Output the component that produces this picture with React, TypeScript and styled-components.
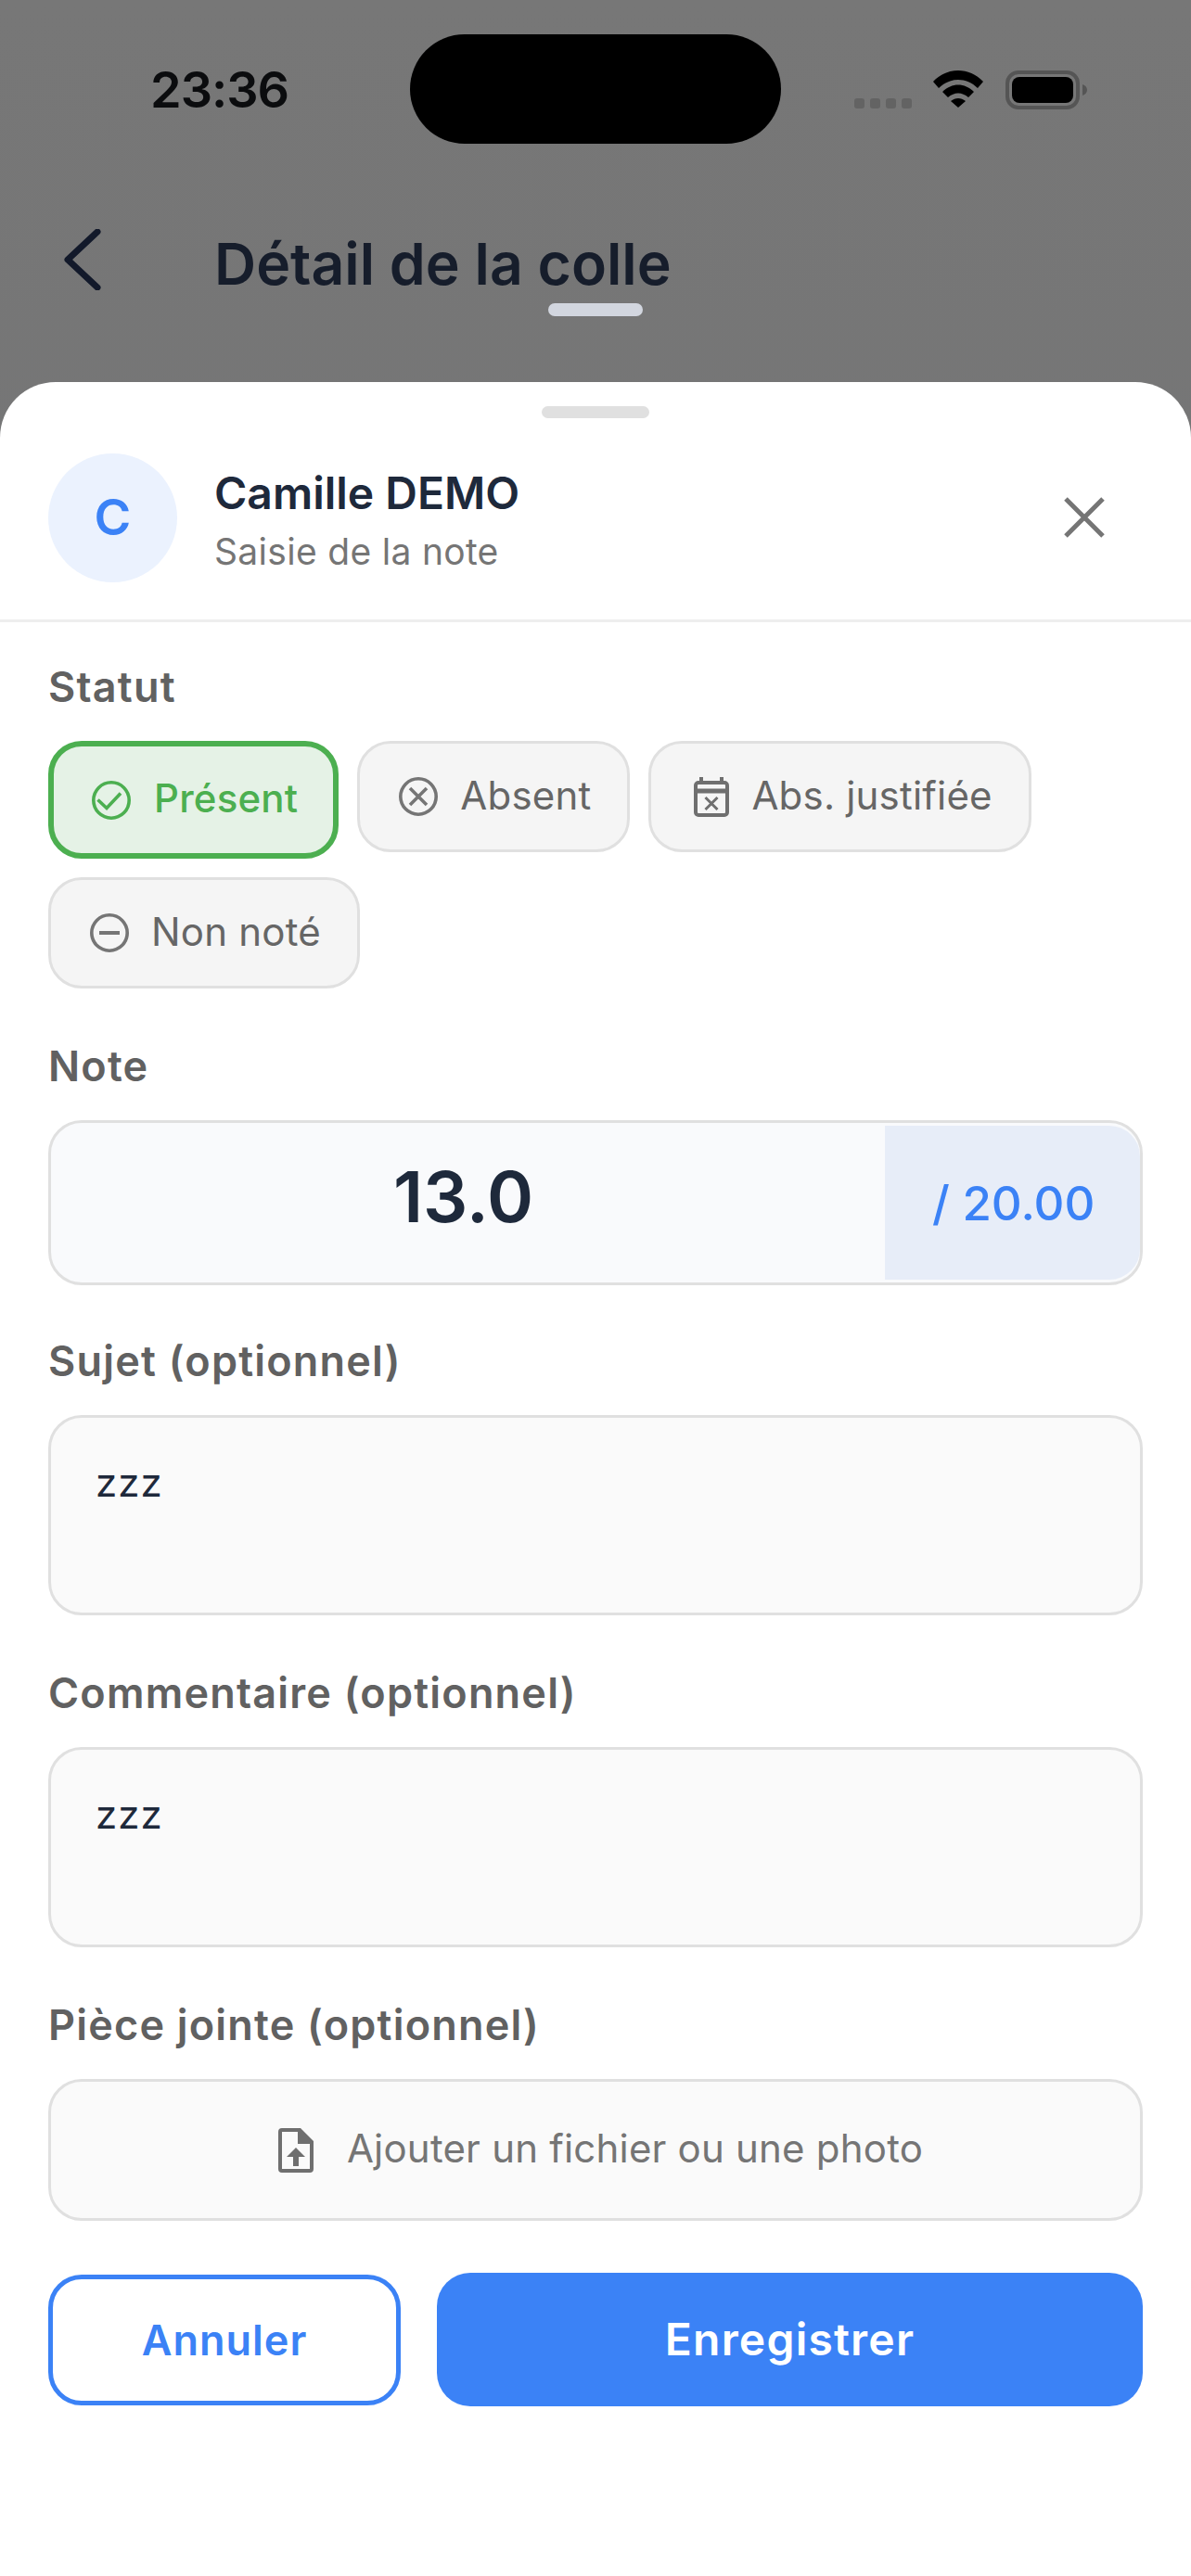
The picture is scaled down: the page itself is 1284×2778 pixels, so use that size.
import React from "react";
import styled, { createGlobalStyle } from "styled-components";

const Global = createGlobalStyle`
  html, body { margin: 0; padding: 0; background: #fff; }
  * { box-sizing: border-box; }
  body { font-family: Inter, "Liberation Sans", sans-serif; }
`;
const Screen = styled.div`
  width: 1284px; height: 2778px; display: flex; flex-direction: column; overflow: hidden;
  background: linear-gradient(#777777, #6f7072);
`;
const Backdrop = styled.div`
  height: 412px; flex: none; display: flex; flex-direction: column;
`;
const StatusBar = styled.div`
  height: 158px; margin-top: 37px; flex: none; display: flex; align-items: flex-start;
`;
const Time = styled.div`
  width: 442px; padding-left: 162px; padding-top: 27px;
  font: 600 54px/66px Inter, sans-serif; color: #0b0c0e; letter-spacing: -1px;
`;
const Island = styled.div`
  width: 400px; height: 118px; border-radius: 59px; background: #000; flex: none;
`;
const StatusIcons = styled.div`
  display: flex; align-items: flex-start; margin-left: 79px; padding-top: 39px;
`;
const Dots = styled.div`
  display: flex; gap: 6px; margin-top: 30px; margin-right: 23px;
`;
const Dot = styled.span`
  width: 11px; height: 11px; border-radius: 3px; background: #636363;
`;
const NavBar = styled.div`
  display: flex; align-items: center; height: 82px; margin-top: 48px; padding-left: 68px; flex: none;
`;
const Back = styled.svg`
  flex: none; display: block; margin-bottom: 8px;
`;
const Title = styled.div`
  margin-left: 121px; font: 600 62.5px/82px Inter, sans-serif; color: #161d2b;
`;
const NavPill = styled.div`
  align-self: center; width: 102px; height: 14px; border-radius: 7px; background: #d2d6df; margin-top: 2px;
`;
const Sheet = styled.div`
  flex: 1; background: #fff; border-radius: 60px 60px 0 0; display: flex; flex-direction: column;
`;
const Handle = styled.div`
  align-self: center; width: 116px; height: 13px; border-radius: 7px; background: #e0e0e0; margin-top: 26px; flex: none;
`;
const Header = styled.div`
  height: 220px; flex: none; display: flex; align-items: center; padding: 0 93px 3px 52px;
  border-bottom: 3px solid #eeeeee;
`;
const Avatar = styled.div`
  width: 139px; height: 139px; border-radius: 50%; background: #ebf2fe; color: #3b82f6;
  display: flex; align-items: center; justify-content: center; font: 600 54px/1 Inter, sans-serif; flex: none;
`;
const HeaderText = styled.div`
  flex: 1; margin-left: 40px; padding-top: 6px; display: flex; flex-direction: column; gap: 9px;
`;
const Name = styled.div`
  font: 600 48px/58px Inter, sans-serif; color: #1e293b;
`;
const Sub = styled.div`
  font: 400 39px/50px Inter, sans-serif; color: #757575; letter-spacing: 0.3px;
`;
const Body = styled.div`
  padding: 45px 52px 0; display: flex; flex-direction: column;
`;
const Field = styled.div<{ $gap?: number }>`
  display: flex; flex-direction: column; margin-bottom: ${(p) => p.$gap ?? 59}px;
`;
const Label = styled.div`
  font: 600 45px/50px Inter, sans-serif; color: #616161; letter-spacing: 1.2px; margin-bottom: 33px;
`;
const Chips = styled.div`
  display: flex; flex-wrap: wrap; gap: 20px; align-items: flex-start;
`;
const Chip = styled.div<{ $active?: boolean }>`
  display: flex; align-items: center; gap: ${(p) => (p.$active ? 25 : 24)}px; height: ${(p) => (p.$active ? 127 : 120)}px;
  padding: 0 ${(p) => (p.$active ? 38 : 39)}px 0 ${(p) => (p.$active ? 41 : 42)}px; border-radius: 36px;
  border: ${(p) => (p.$active ? "6px solid #4caf50" : "3px solid #e0e0e0")};
  background: ${(p) => (p.$active ? "#e5f2e6" : "#f5f5f5")};
  color: ${(p) => (p.$active ? "#4caf50" : "#666666")};
  font: ${(p) => (p.$active ? 500 : 400)} 42px/50px Inter, sans-serif; letter-spacing: 0.2px;
`;
const ChipText = styled.span<{ $lift: number }>`
  margin-bottom: ${(p) => p.$lift}px;
`;
const CalendarMark = styled.svg`
  flex: none; display: block; margin-left: 4px;
`;
const NoteBox = styled.div`
  height: 178px; border: 3px solid #e0e0e0; border-radius: 36px; background: #f9fafc;
  display: flex; align-items: center; overflow: hidden;
`;
const NoteValue = styled.div`
  flex: 1; text-align: center; font: 600 76px/1 Inter, sans-serif; color: #1e293b; padding: 0 10px 15px 0;
`;
const NoteMax = styled.div`
  width: 275px; height: 166px; display: flex; align-items: center; padding-left: 51px;
  border-radius: 0 33px 33px 0;
  background: #e7edf8; color: #3b82f6; font: 500 51px/1 Inter, sans-serif; flex: none;
`;
const TextBox = styled.div`
  height: 216px; border: 3px solid #e0e0e0; border-radius: 36px; background: #fafafa;
  padding: 45px 48px; font: 400 42px/50px Inter, sans-serif; color: #1e293b; letter-spacing: 1px;
`;
const Upload = styled.div`
  height: 153px; border: 3px solid #e0e0e0; border-radius: 36px; background: #fafafa;
  display: flex; align-items: center; justify-content: center; gap: 36px; padding-left: 11px;
  font: 400 42px/50px Inter, sans-serif; color: #757575; letter-spacing: 0.2px;
`;
const UploadText = styled.span`
  margin-bottom: 3px;
`;
const Actions = styled.div`
  display: flex; gap: 39px; align-items: center; margin-top: -3px;
`;
const Cancel = styled.div`
  width: 380px; height: 141px; border: 5px solid #3b82f6; border-radius: 36px; background: #fff;
  display: flex; align-items: center; justify-content: center;
  color: #3b82f6; font: 600 45px/1 Inter, sans-serif; letter-spacing: 1px;
`;
const Save = styled.div`
  flex: 1; height: 144px; border-radius: 36px; background: #3b82f6;
  display: flex; align-items: center; justify-content: center;
  color: #fff; font: 600 48px/1 Inter, sans-serif; letter-spacing: 1.2px;
`;
const Stroke = styled.svg`
  flex: none; display: block;
`;
const WifiMark = styled.svg`
  flex: none; display: block; margin-right: 24px;
`;

const CircleIcon = ({ color, children }: { color: string; children: React.ReactNode }) => (
  <Stroke width="42" height="42" viewBox="0 0 42 42" fill="none" stroke={color} strokeWidth="3.6">
    <circle cx="21" cy="21" r="19.2" />
    {children}
  </Stroke>
);

const Wifi = () => (
  <WifiMark width="54" height="40" viewBox="0 0 54 40" fill="#000">
    <path d="M0 12C15-4 39-4 54 12l-6 7C36 7 18 7 6 19z" />
    <path d="M10 23c10-10 24-10 34 0l-6 6c-7-6-15-6-22 0z" />
    <path d="M19 33c5-4 11-4 16 0l-8 7z" />
  </WifiMark>
);
const Battery = () => (
  <Stroke width="88" height="42" viewBox="0 0 88 42">
    <rect x="2" y="2" width="76" height="38" rx="12" fill="none" stroke="#555" strokeWidth="4" />
    <rect x="7" y="7" width="66" height="28" rx="8" fill="#000" />
    <path d="M83 15c3 1 5 3 5 6s-2 5-5 6z" fill="#555" />
  </Stroke>
);

export default function App() {
  return (
    <Screen>
      <Global />
      <Backdrop>
        <StatusBar>
          <Time>23:36</Time>
          <Island />
          <StatusIcons>
            <Dots><Dot /><Dot /><Dot /><Dot /></Dots>
            <Wifi />
            <Battery />
          </StatusIcons>
        </StatusBar>
        <NavBar>
          <Back width="42" height="66" viewBox="0 0 42 66" fill="none" stroke="#12192a" strokeWidth="7" strokeLinecap="round" strokeLinejoin="round">
            <path d="M37 3 5 33l32 30" />
          </Back>
          <Title>Détail de la colle</Title>
        </NavBar>
        <NavPill />
      </Backdrop>
      <Sheet>
        <Handle />
        <Header>
          <Avatar>C</Avatar>
          <HeaderText>
            <Name>Camille DEMO</Name>
            <Sub>Saisie de la note</Sub>
          </HeaderText>
          <Stroke width="44" height="44" viewBox="0 0 44 44" fill="none" stroke="#757575" strokeWidth="5">
            <path d="M2 2l40 40M42 2 2 42" />
          </Stroke>
        </Header>
        <Body>
          <Field>
            <Label>Statut</Label>
            <Chips>
              <Chip $active>
                <CircleIcon color="#4caf50"><path d="M6.500 20.500 16 29.500 31 13.500" /></CircleIcon>
                <ChipText $lift={4}>Présent</ChipText>
              </Chip>
              <Chip>
                <CircleIcon color="#757575"><path d="M12 12l18 18M30 12 12 30" /></CircleIcon>
                <ChipText $lift={2}>Absent</ChipText>
              </Chip>
              <Chip>
                <CalendarMark width="38" height="43" viewBox="0 0 38 43" fill="none" stroke="#6f6f6f" strokeWidth="4">
                  <rect x="2" y="6" width="34" height="35" rx="3" />
                  <path d="M2 15h34" strokeWidth="5" />
                  <path d="M8 0v6M30 0v6" />
                  <path d="M12.500 22l13 13M25.500 22l-13 13" strokeWidth="3" />
                </CalendarMark>
                <ChipText $lift={2}>Abs. justifiée</ChipText>
              </Chip>
              <Chip>
                <CircleIcon color="#757575"><path d="M10 21h22" strokeWidth="4" /></CircleIcon>
                <ChipText $lift={2}>Non noté</ChipText>
              </Chip>
            </Chips>
          </Field>
          <Field $gap={57}>
            <Label>Note</Label>
            <NoteBox>
              <NoteValue>13.0</NoteValue>
              <NoteMax>/ 20.00</NoteMax>
            </NoteBox>
          </Field>
          <Field>
            <Label>Sujet (optionnel)</Label>
            <TextBox>zzz</TextBox>
          </Field>
          <Field>
            <Label>Commentaire (optionnel)</Label>
            <TextBox>zzz</TextBox>
          </Field>
          <Field>
            <Label>Pièce jointe (optionnel)</Label>
            <Upload>
              <Stroke width="38" height="48" viewBox="0 0 38 48">
                <path d="M4 0h20l14 14v30a4 4 0 0 1-4 4H4a4 4 0 0 1-4-4V4a4 4 0 0 1 4-4zm0 4v40h30V17H21V4z" fill="#6f6f6f" fillRule="evenodd" />
                <path d="M19 21l10 10h-7v10h-6V31H9z" fill="#6f6f6f" />
              </Stroke>
              <UploadText>Ajouter un fichier ou une photo</UploadText>
            </Upload>
          </Field>
          <Actions>
            <Cancel>Annuler</Cancel>
            <Save>Enregistrer</Save>
          </Actions>
        </Body>
      </Sheet>
    </Screen>
  );
}
